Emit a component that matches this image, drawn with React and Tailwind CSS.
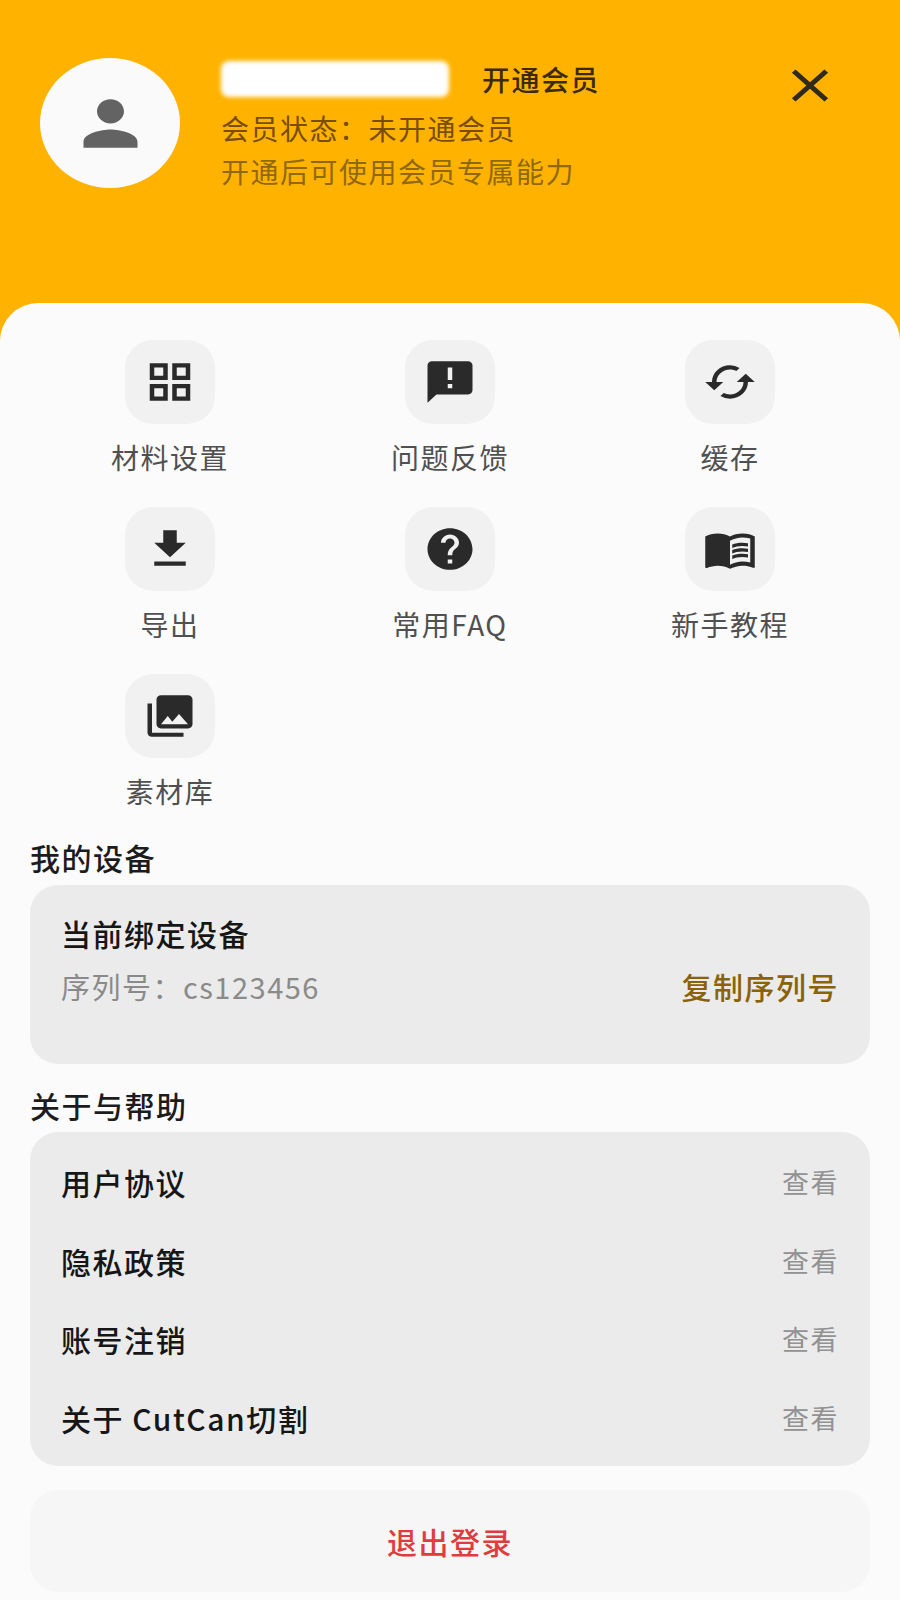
import React from "react";
import { MdPerson, MdClose, MdOutlineGridView, MdAnnouncement, MdCached, MdFileDownload, MdHelp, MdMenuBook, MdPhotoLibrary } from "react-icons/md";

const tiles = [
  { label: "材料设置", Icon: MdOutlineGridView },
  { label: "问题反馈", Icon: MdAnnouncement },
  { label: "缓存", Icon: MdCached },
  { label: "导出", Icon: MdFileDownload },
  { label: "常用FAQ", Icon: MdHelp },
  { label: "新手教程", Icon: MdMenuBook },
  { label: "素材库", Icon: MdPhotoLibrary },
];

const links = ["用户协议", "隐私政策", "账号注销", "关于 CutCan切割"];

export default function App() {
  return (
    <div className="w-[900px] h-[1600px] overflow-hidden bg-[#ffb300] font-['Noto_Sans_CJK_SC','Noto_Sans',sans-serif] tracking-[1.5px]">
      <header className="h-[303px] pt-[58px] pl-[40px] pr-[59px] flex items-start">
        <div className="w-[140px] h-[130px] rounded-[50%] bg-[#fafafa] flex items-center justify-center shrink-0">
          <MdPerson size={81} preserveAspectRatio="none" className="w-[81px] h-[73px] text-[#636363]" />
        </div>
        <div className="ml-[41px]">
          <div className="flex items-center h-[42px]">
            <div className="w-[228px] h-[36px] bg-white rounded-[8px] blur-[2px]" />
            <span className="ml-[33px] text-[28px] leading-[40px] font-medium text-[#3b2a05]">开通会员</span>
          </div>
          <p className="mt-[8px] text-[28px] leading-[40px] text-[#7a4c05]">会员状态：未开通会员</p>
          <p className="mt-[3px] text-[28px] leading-[40px] text-[#90690f]">开通后可使用会员专属能力</p>
        </div>
        <MdClose preserveAspectRatio="none" className="ml-auto w-[62px] h-[55px] text-[#2f2a1c]" />
      </header>

      <main className="h-[1297px] rounded-t-[38px] bg-[#fbfbfb] px-[30px] pt-[37px]">
        <div className="grid grid-cols-3 gap-y-[30px]">
          {tiles.map(({ label, Icon }) => (
            <div key={label} className="flex flex-col items-center">
              <div className="w-[90px] h-[84px] rounded-[28px] bg-[#f1f1f1] flex items-center justify-center">
                <Icon preserveAspectRatio="none" className="w-[54px] h-[50px] text-[#2a2a2a]" />
              </div>
              <span className="mt-[13px] text-[28px] leading-[40px] text-[#505050]">{label}</span>
            </div>
          ))}
        </div>

        <h2 className="mt-[24px] text-[30px] leading-[44px] font-medium text-[#1c1c1c]">我的设备</h2>
        <section className="mt-[6px] h-[179px] rounded-[28px] bg-[#ebebeb] pl-[31px] pr-[31px] pt-[26px]">
          <p className="text-[30px] leading-[44px] font-medium text-[#161616]">当前绑定设备</p>
          <div className="mt-[9px] flex items-center justify-between">
            <span className="text-[29px] leading-[44px] text-[#8a8a8a]">序列号：cs123456</span>
            <span className="text-[30px] leading-[44px] font-medium text-[#8a6207]">复制序列号</span>
          </div>
        </section>

        <h2 className="mt-[19px] text-[30px] leading-[44px] font-medium text-[#1c1c1c]">关于与帮助</h2>
        <section className="mt-[5px] h-[334px] rounded-[28px] bg-[#ebebeb] px-[31px] pt-[11px]">
          {links.map((label) => (
            <div key={label} className="h-[78.5px] flex items-center justify-between">
              <span className="text-[30px] leading-[44px] font-medium text-[#161616]">{label}</span>
              <span className="text-[27px] leading-[44px] text-[#929292]">查看</span>
            </div>
          ))}
        </section>

        <button className="mt-[24px] w-full h-[102px] rounded-[28px] bg-[#f6f6f6] text-[30px] font-medium text-[#df3d3d] flex items-center justify-center">
          退出登录
        </button>
      </main>
    </div>
  );
}
